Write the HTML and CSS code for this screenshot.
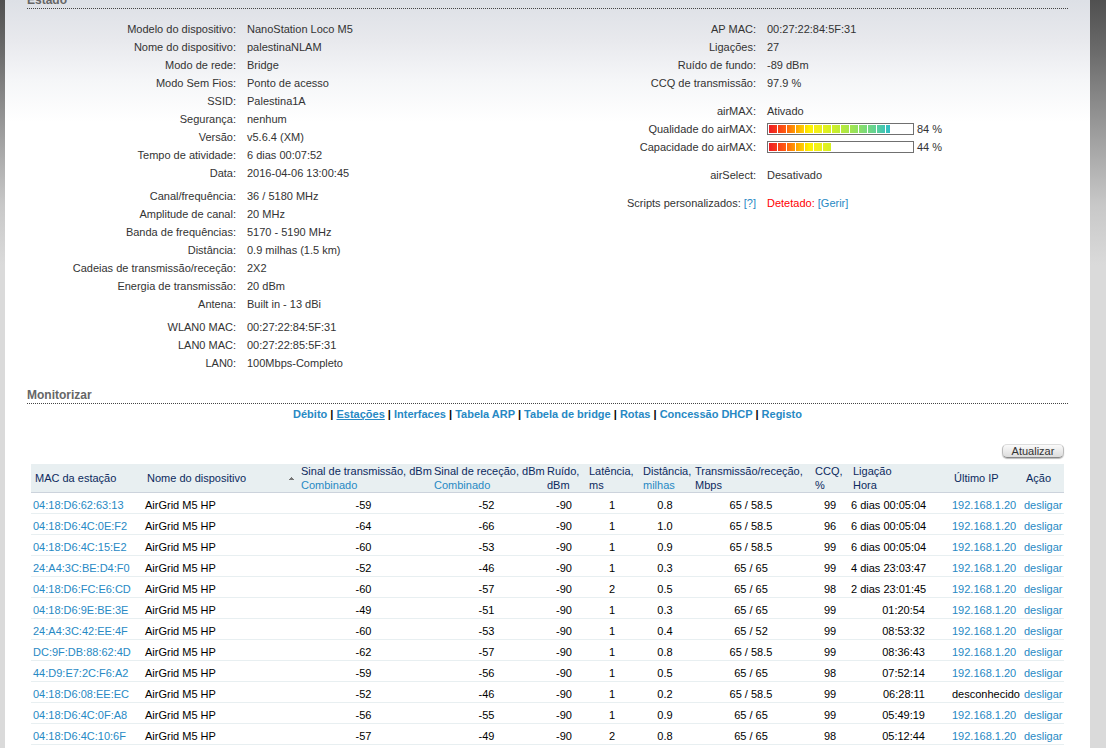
FILE: index.html
```html
<!DOCTYPE html>
<html lang="pt">
<head>
<meta charset="utf-8">
<title>palestinaNLAM</title>
<link rel="stylesheet" href="styles.css">
</head>
<body>
<main class="page">
  <h2 class="section-title section-title-first">Estado</h2>
  <div class="status">
    <div class="status-column">
      <dl class="facts">
        <dt>Modelo do dispositivo:</dt><dd>NanoStation Loco M5</dd>
        <dt>Nome do dispositivo:</dt><dd>palestinaNLAM</dd>
        <dt>Modo de rede:</dt><dd>Bridge</dd>
        <dt>Modo Sem Fios:</dt><dd>Ponto de acesso</dd>
        <dt>SSID:</dt><dd>Palestina1A</dd>
        <dt>Segurança:</dt><dd>nenhum</dd>
        <dt>Versão:</dt><dd>v5.6.4 (XM)</dd>
        <dt>Tempo de atividade:</dt><dd>6 dias 00:07:52</dd>
        <dt>Data:</dt><dd>2016-04-06 13:00:45</dd>
      </dl>
      <dl class="facts">
        <dt>Canal/frequência:</dt><dd>36 / 5180 MHz</dd>
        <dt>Amplitude de canal:</dt><dd>20 MHz</dd>
        <dt>Banda de frequências:</dt><dd>5170 - 5190 MHz</dd>
        <dt>Distância:</dt><dd>0.9 milhas (1.5 km)</dd>
        <dt>Cadeias de transmissão/receção:</dt><dd>2X2</dd>
        <dt>Energia de transmissão:</dt><dd>20 dBm</dd>
        <dt>Antena:</dt><dd>Built in - 13 dBi</dd>
      </dl>
      <dl class="facts">
        <dt>WLAN0 MAC:</dt><dd>00:27:22:84:5F:31</dd>
        <dt>LAN0 MAC:</dt><dd>00:27:22:85:5F:31</dd>
        <dt>LAN0:</dt><dd>100Mbps-Completo</dd>
      </dl>
    </div>
    <div class="status-column status-column-wide">
      <dl class="facts">
        <dt>AP MAC:</dt><dd>00:27:22:84:5F:31</dd>
        <dt>Ligações:</dt><dd>27</dd>
        <dt>Ruído de fundo:</dt><dd>-89 dBm</dd>
        <dt>CCQ de transmissão:</dt><dd>97.9 %</dd>
      </dl>
      <dl class="facts">
        <dt>airMAX:</dt><dd>Ativado</dd>
        <dt id="quality">Qualidade do airMAX:</dt>
        <dd class="gauge"><span class="bar" role="meter" aria-labelledby="quality" aria-valuemin="0" aria-valuemax="100" aria-valuenow="84"><span class="bar-fill" style="width: 84%"></span></span>84 %</dd>
        <dt id="capacity">Capacidade do airMAX:</dt>
        <dd class="gauge"><span class="bar" role="meter" aria-labelledby="capacity" aria-valuemin="0" aria-valuemax="100" aria-valuenow="44"><span class="bar-fill" style="width: 44%"></span></span>44 %</dd>
      </dl>
      <dl class="facts">
        <dt>airSelect:</dt><dd>Desativado</dd>
      </dl>
      <dl class="facts">
        <dt>Scripts personalizados: <a href="#help">[?]</a></dt><dd><span class="alert">Detetado:</span> <a href="#manage">[Gerir]</a></dd>
      </dl>
    </div>
  </div>

  <h2 class="section-title">Monitorizar</h2>
  <nav class="tabs">
    <a href="#throughput">Débito</a> | <a class="current" href="#stations">Estações</a> | <a href="#interfaces">Interfaces</a> | <a href="#arp">Tabela ARP</a> | <a href="#bridge">Tabela de bridge</a> | <a href="#routes">Rotas</a> | <a href="#dhcp">Concessão DHCP</a> | <a href="#log">Registo</a>
  </nav>

  <div class="stations">
    <button class="refresh" type="button">Atualizar</button>
    <table class="station-table">
      <colgroup>
        <col class="w-mac"><col class="w-name"><col class="w-tx"><col class="w-rx"><col class="w-noise"><col class="w-latency"><col class="w-distance"><col class="w-rate"><col class="w-ccq"><col class="w-time"><col class="w-ip"><col class="w-action">
      </colgroup>
      <thead>
        <tr>
          <th>MAC da estação</th>
          <th><span class="sorted">Nome do dispositivo<svg class="arrow" width="5" height="3" viewBox="0 0 5 3" aria-hidden="true"><path d="M2 0h1v1h1v1h1v1H0V2h1V1h1z" fill="#777"/></svg></span></th>
          <th>Sinal de transmissão, dBm<br><a href="#tx">Combinado</a></th>
          <th>Sinal de receção, dBm<br><a href="#rx">Combinado</a></th>
          <th>Ruído,<br>dBm</th>
          <th>Latência,<br>ms</th>
          <th>Distância,<br><a href="#units">milhas</a></th>
          <th>Transmissão/receção,<br>Mbps</th>
          <th>CCQ,<br>%</th>
          <th>Ligação<br>Hora</th>
          <th>Último IP</th>
          <th>Ação</th>
        </tr>
      </thead>
      <tbody>
        <tr><td><a href="#s">04:18:D6:62:63:13</a></td><td>AirGrid M5 HP</td><td class="num">-59</td><td class="num">-52</td><td class="num">-90</td><td class="num">1</td><td class="num">0.8</td><td class="num">65 / 58.5</td><td class="num">99</td><td class="time">6 dias 00:05:04</td><td><a href="#ip">192.168.1.20</a></td><td><a href="#kick">desligar</a></td></tr>
        <tr><td><a href="#s">04:18:D6:4C:0E:F2</a></td><td>AirGrid M5 HP</td><td class="num">-64</td><td class="num">-66</td><td class="num">-90</td><td class="num">1</td><td class="num">1.0</td><td class="num">65 / 58.5</td><td class="num">96</td><td class="time">6 dias 00:05:04</td><td><a href="#ip">192.168.1.20</a></td><td><a href="#kick">desligar</a></td></tr>
        <tr><td><a href="#s">04:18:D6:4C:15:E2</a></td><td>AirGrid M5 HP</td><td class="num">-60</td><td class="num">-53</td><td class="num">-90</td><td class="num">1</td><td class="num">0.9</td><td class="num">65 / 58.5</td><td class="num">99</td><td class="time">6 dias 00:05:04</td><td><a href="#ip">192.168.1.20</a></td><td><a href="#kick">desligar</a></td></tr>
        <tr><td><a href="#s">24:A4:3C:BE:D4:F0</a></td><td>AirGrid M5 HP</td><td class="num">-52</td><td class="num">-46</td><td class="num">-90</td><td class="num">1</td><td class="num">0.3</td><td class="num">65 / 65</td><td class="num">99</td><td class="time">4 dias 23:03:47</td><td><a href="#ip">192.168.1.20</a></td><td><a href="#kick">desligar</a></td></tr>
        <tr><td><a href="#s">04:18:D6:FC:E6:CD</a></td><td>AirGrid M5 HP</td><td class="num">-60</td><td class="num">-57</td><td class="num">-90</td><td class="num">2</td><td class="num">0.5</td><td class="num">65 / 65</td><td class="num">98</td><td class="time">2 dias 23:01:45</td><td><a href="#ip">192.168.1.20</a></td><td><a href="#kick">desligar</a></td></tr>
        <tr><td><a href="#s">04:18:D6:9E:BE:3E</a></td><td>AirGrid M5 HP</td><td class="num">-49</td><td class="num">-51</td><td class="num">-90</td><td class="num">1</td><td class="num">0.3</td><td class="num">65 / 65</td><td class="num">99</td><td class="time">01:20:54</td><td><a href="#ip">192.168.1.20</a></td><td><a href="#kick">desligar</a></td></tr>
        <tr><td><a href="#s">24:A4:3C:42:EE:4F</a></td><td>AirGrid M5 HP</td><td class="num">-60</td><td class="num">-53</td><td class="num">-90</td><td class="num">1</td><td class="num">0.4</td><td class="num">65 / 52</td><td class="num">99</td><td class="time">08:53:32</td><td><a href="#ip">192.168.1.20</a></td><td><a href="#kick">desligar</a></td></tr>
        <tr><td><a href="#s">DC:9F:DB:88:62:4D</a></td><td>AirGrid M5 HP</td><td class="num">-62</td><td class="num">-57</td><td class="num">-90</td><td class="num">1</td><td class="num">0.8</td><td class="num">65 / 58.5</td><td class="num">99</td><td class="time">08:36:43</td><td><a href="#ip">192.168.1.20</a></td><td><a href="#kick">desligar</a></td></tr>
        <tr><td><a href="#s">44:D9:E7:2C:F6:A2</a></td><td>AirGrid M5 HP</td><td class="num">-59</td><td class="num">-56</td><td class="num">-90</td><td class="num">1</td><td class="num">0.5</td><td class="num">65 / 65</td><td class="num">98</td><td class="time">07:52:14</td><td><a href="#ip">192.168.1.20</a></td><td><a href="#kick">desligar</a></td></tr>
        <tr><td><a href="#s">04:18:D6:08:EE:EC</a></td><td>AirGrid M5 HP</td><td class="num">-52</td><td class="num">-46</td><td class="num">-90</td><td class="num">1</td><td class="num">0.2</td><td class="num">65 / 58.5</td><td class="num">99</td><td class="time">06:28:11</td><td>desconhecido</td><td><a href="#kick">desligar</a></td></tr>
        <tr><td><a href="#s">04:18:D6:4C:0F:A8</a></td><td>AirGrid M5 HP</td><td class="num">-56</td><td class="num">-55</td><td class="num">-90</td><td class="num">1</td><td class="num">0.9</td><td class="num">65 / 65</td><td class="num">99</td><td class="time">05:49:19</td><td><a href="#ip">192.168.1.20</a></td><td><a href="#kick">desligar</a></td></tr>
        <tr><td><a href="#s">04:18:D6:4C:10:6F</a></td><td>AirGrid M5 HP</td><td class="num">-57</td><td class="num">-49</td><td class="num">-90</td><td class="num">2</td><td class="num">0.8</td><td class="num">65 / 65</td><td class="num">98</td><td class="time">05:12:44</td><td><a href="#ip">192.168.1.20</a></td><td><a href="#kick">desligar</a></td></tr>
      </tbody>
    </table>
  </div>
</main>
</body>
</html>
```
FILE: styles.css
```css
* {
  box-sizing: border-box;
}

body {
  margin: 0;
  background: #dadada linear-gradient(#505050 0, #6a6a6a 50px, #989898 125px, #c8c8c8 205px, #dadada 265px) no-repeat;
  font: 11px/18px "Liberation Sans", Arial, sans-serif;
  color: #000;
}

a {
  color: #2789c4;
  text-decoration: none;
}

.page {
  display: flow-root;
  margin: 0 16px 0 5px;
  padding: 0 22px 3px;
  overflow: hidden;
  background: #fff linear-gradient(#dde0e6 0, #e8e9ed 40px, #f5f6f8 80px, #fff 122px) no-repeat;
}

.section-title {
  margin: 15px 0 0;
  border-bottom: 1px dotted #444;
  font-size: 12px;
  line-height: 16px;
  color: #666;
}

.section-title-first {
  margin-top: -8px;
}

.status {
  display: grid;
  grid-template-columns: 1fr 1fr;
  padding: 11px 1px 0 0;
  color: #333;
}

.status-column {
  display: flex;
  flex-direction: column;
  gap: 5px;
}

.status-column-wide {
  gap: 10px;
}

.facts {
  display: grid;
  grid-template-columns: 209px 1fr;
  column-gap: 11px;
  margin: 0;
}

.facts dt {
  text-align: right;
  white-space: nowrap;
}

.facts dd {
  margin: 0;
}

.alert {
  color: #f00;
}

.gauge {
  display: flex;
  align-items: center;
  gap: 3px;
}

.bar {
  display: flex;
  width: 147px;
  height: 12px;
  padding: 1px 0 1px 1px;
  border: 1px solid #707070;
  background: #fff;
}

.bar-fill {
  background:
    repeating-linear-gradient(90deg, transparent 0 8px, #fff 8px 9px),
    linear-gradient(90deg, #ee1c25 0, #ff5a10 16px, #ff9c00 26px, #fff200 40px, #f4f01a 48px, #d4f022 62px, #9ce455 84px, #62d294 106px, #22b8d0 124px);
}

.tabs {
  padding: 2px 0 0;
  line-height: 16px;
  text-align: center;
  font-weight: bold;
}

.tabs .current {
  text-decoration: underline;
}

.stations {
  display: flex;
  flex-direction: column;
  align-items: flex-end;
  gap: 6px;
  padding: 22px 4px 0;
}

.refresh {
  width: 62px;
  height: 14px;
  padding: 0;
  border: 1px solid #bbb;
  border-top-color: #ddd;
  border-bottom-color: #888;
  border-radius: 5px;
  background: linear-gradient(#fafafa, #dcdcdc);
  box-shadow: 0 1px 1px #bbb;
  font: 11px/12px "Liberation Sans", Arial, sans-serif;
  color: #333;
}

.station-table {
  width: 100%;
  table-layout: fixed;
  border-collapse: separate;
  border-spacing: 0;
  white-space: nowrap;
}

.w-mac { width: 112px; }
.w-name { width: 154px; }
.w-tx { width: 133px; }
.w-rx { width: 113px; }
.w-noise { width: 42px; }
.w-latency { width: 54px; }
.w-distance { width: 52px; }
.w-rate { width: 120px; }
.w-ccq { width: 38px; }
.w-time { width: 101px; }
.w-ip { width: 72px; }
.w-action { width: 42px; }

.station-table th {
  padding: 0 0 0 4px;
  border-bottom: 1px solid #ccd3dc;
  background: #e8eff1;
  font-weight: normal;
  line-height: 14px;
  text-align: left;
  color: #0c2a5e;
}

.sorted {
  display: flex;
  align-items: center;
  justify-content: space-between;
  padding-right: 3px;
}

.station-table td {
  padding: 5px 2px 1px;
  border-bottom: 1px solid #e8eff1;
  line-height: 14px;
}

.station-table .num {
  text-align: center;
}

.station-table .time {
  padding-right: 25px;
  text-align: right;
}
```
